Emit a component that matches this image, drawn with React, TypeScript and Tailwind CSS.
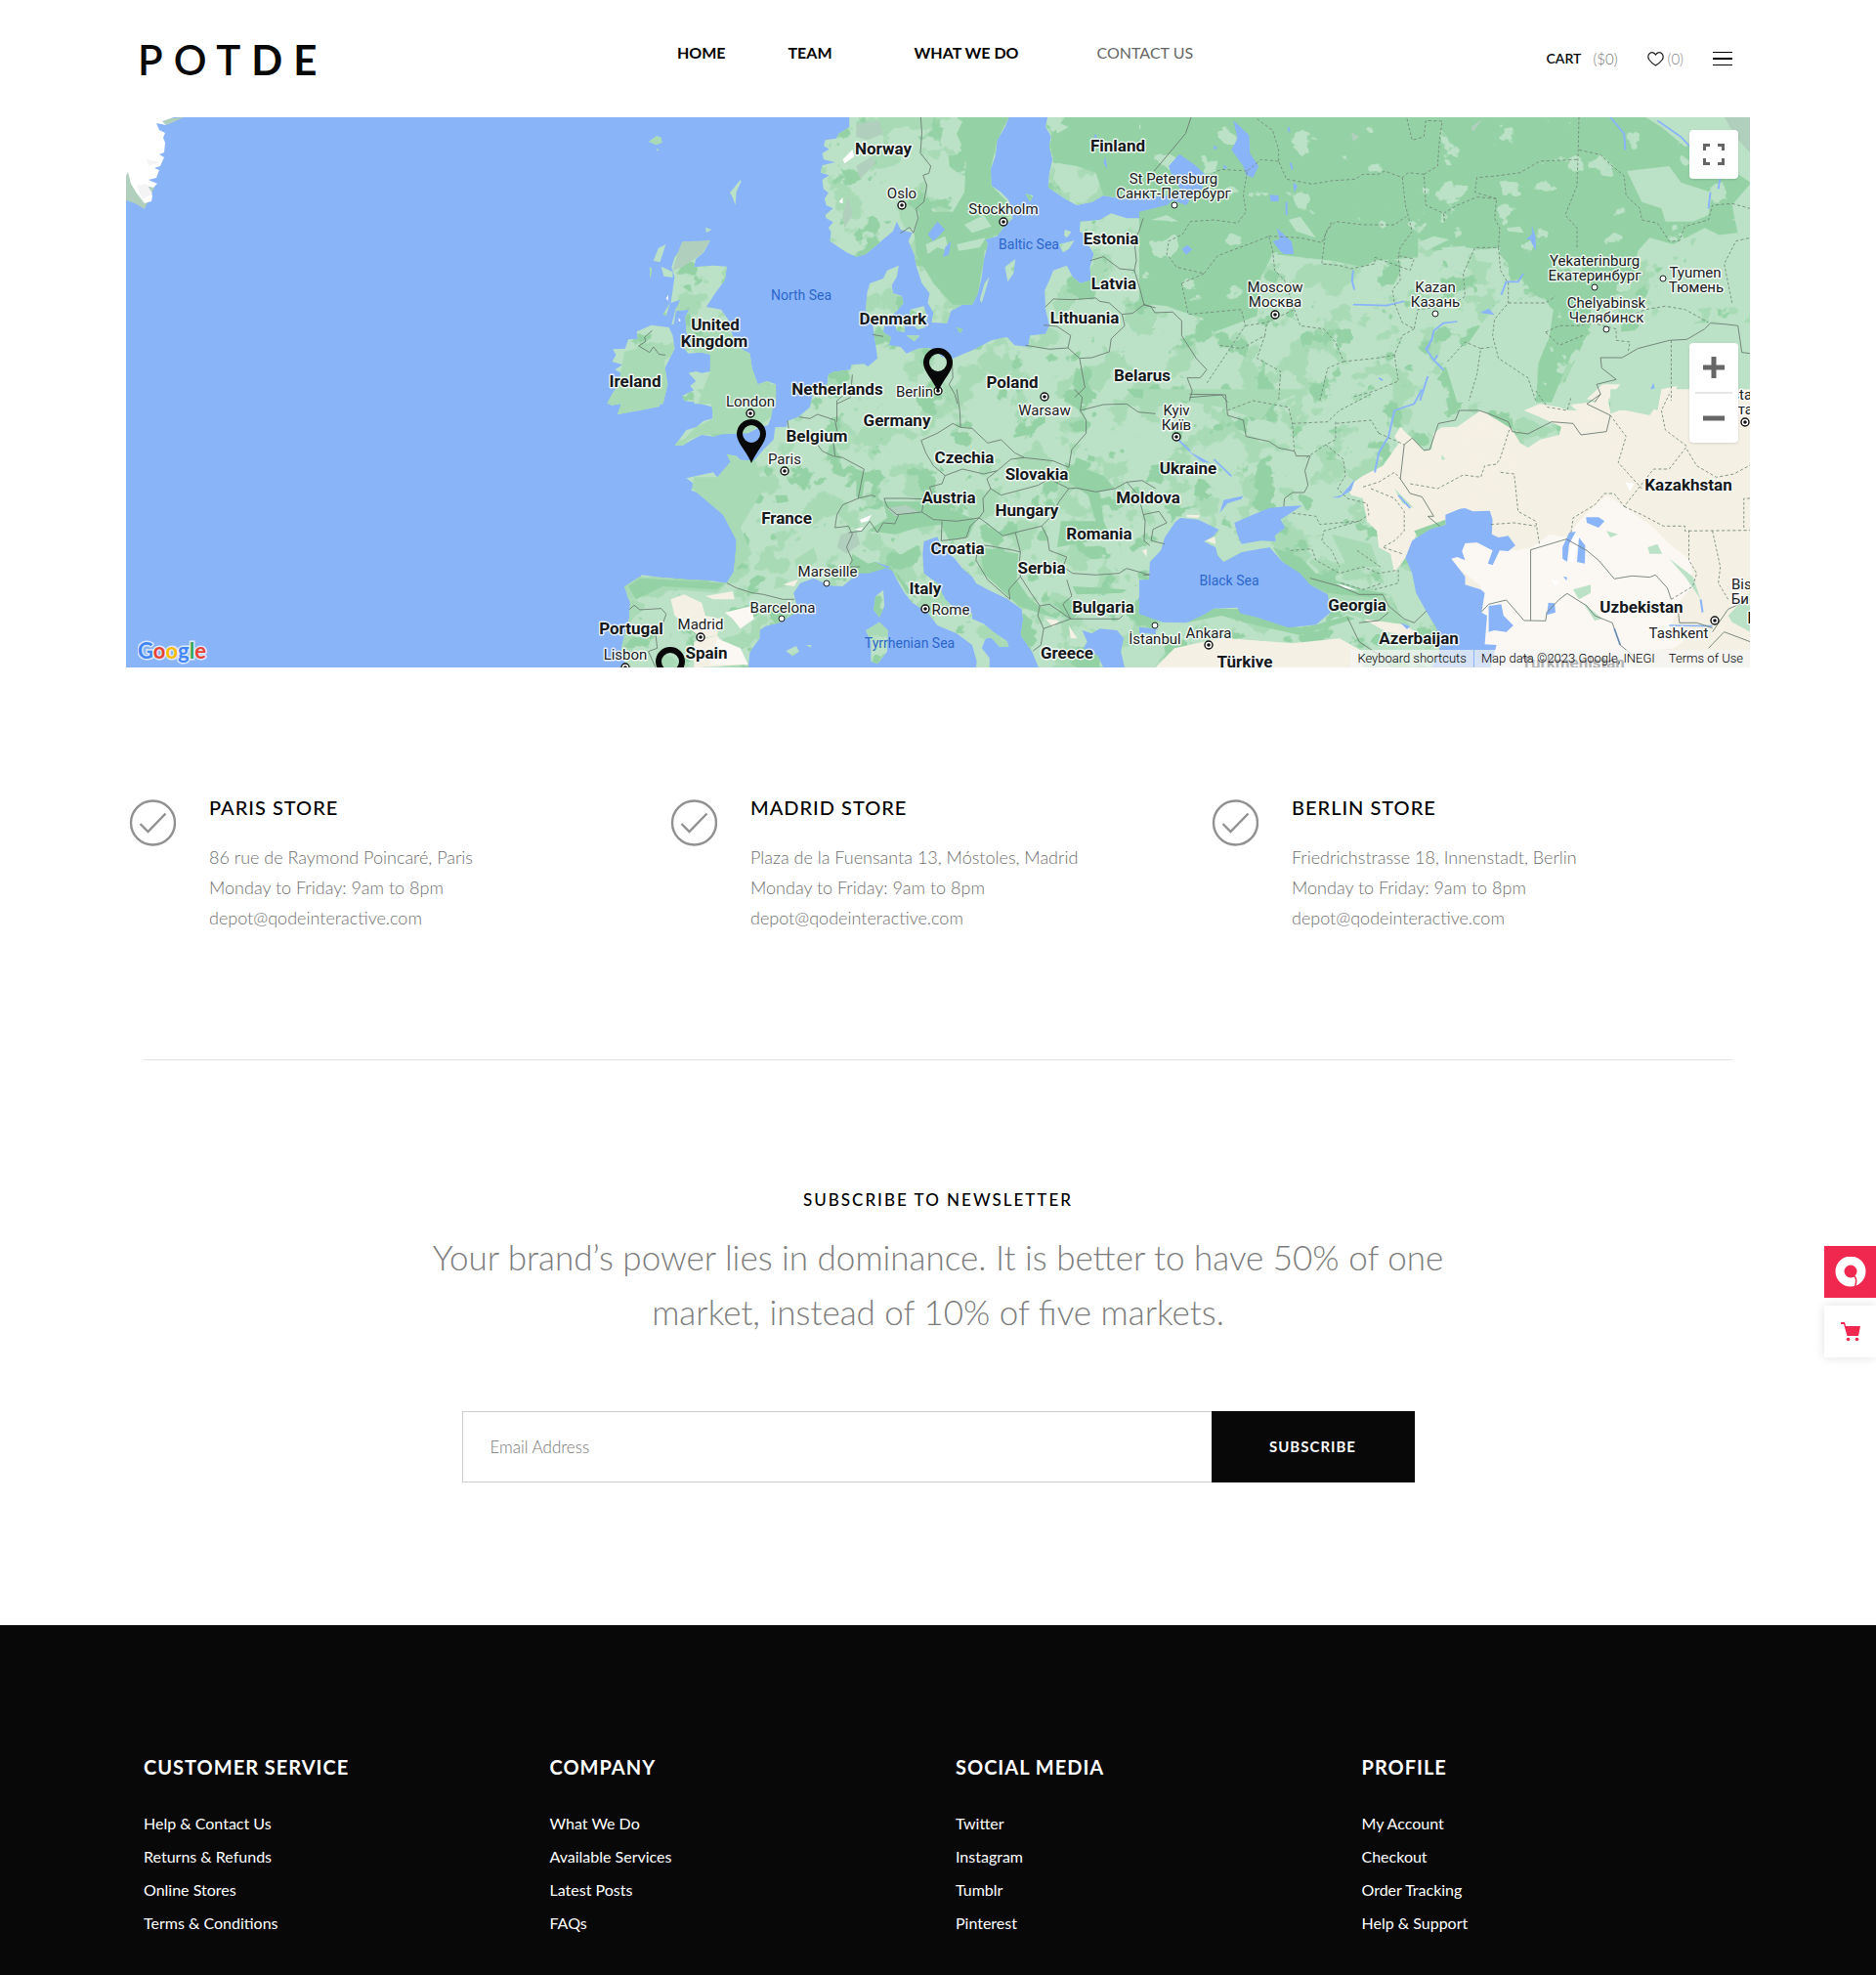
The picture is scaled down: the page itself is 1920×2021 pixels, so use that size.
import React from "react";

type Label = [text: string, x: number, y: number];
type Point = [x: number, y: number];

const countries: Label[] = [
  ["Norway", 904, 158], ["Finland", 1144, 155], ["Estonia", 1137, 250], ["Latvia", 1140, 296],
  ["Lithuania", 1110, 331], ["Denmark", 914, 332], ["United", 732, 338], ["Kingdom", 731, 355],
  ["Ireland", 650, 396], ["Netherlands", 857, 404], ["Poland", 1036, 397], ["Belarus", 1169, 390],
  ["Germany", 918, 436], ["Belgium", 836, 452], ["Czechia", 987, 474], ["Slovakia", 1061, 491],
  ["Austria", 971, 515], ["Hungary", 1051, 528], ["Moldova", 1175, 515], ["France", 805, 536],
  ["Romania", 1125, 552], ["Croatia", 980, 567], ["Serbia", 1066, 587], ["Italy", 947, 608],
  ["Bulgaria", 1129, 627], ["Portugal", 646, 649], ["Spain", 723, 674], ["Greece", 1092, 674],
  ["Ukraine", 1216, 485], ["Türkiye", 1274, 683], ["Georgia", 1389, 625], ["Azerbaijan", 1452, 659],
  ["Kazakhstan", 1728, 502], ["Uzbekistan", 1680, 627], ["Turkmenistan", 1610, 684], ["Kyrgyzstan", 1831, 638],
];

const cities: Label[] = [
  ["Oslo", 923, 203], ["Stockholm", 1027, 219], ["Berlin", 936, 406], ["London", 768, 416],
  ["Warsaw", 1069, 425], ["Paris", 803, 475], ["Marseille", 847, 590], ["Barcelona", 801, 627],
  ["Rome", 973, 629], ["Madrid", 717, 644], ["Lisbon", 640, 675], ["St Petersburg", 1201, 188],
  ["Санкт-Петербург", 1201, 203], ["Moscow", 1305, 299], ["Москва", 1305, 314], ["Kazan", 1469, 299],
  ["Казань", 1469, 314], ["Yekaterinburg", 1632, 272], ["Екатеринбург", 1632, 287], ["Tyumen", 1735, 284],
  ["Тюмень", 1736, 299], ["Chelyabinsk", 1644, 315], ["Челябинск", 1644, 330], ["Kyiv", 1204, 425],
  ["Київ", 1204, 440], ["İstanbul", 1182, 659], ["Ankara", 1237, 653], ["Tashkent", 1718, 653],
  ["Astana", 1786, 409], ["Астана", 1786, 424], ["Bishkek", 1798, 603], ["Бишкек", 1799, 618],
];

const seas: Label[] = [
  ["Baltic Sea", 1053, 255], ["North Sea", 820, 307], ["Black Sea", 1258, 599], ["Tyrrhenian Sea", 931, 663],
];

const capitals: Point[] = [
  [923, 210], [1027, 227], [960, 400], [768, 423], [1069, 406], [803, 482], [947, 623], [717, 652],
  [640, 683], [1305, 322], [1204, 447], [1237, 660], [1755, 635], [1786, 432],
];

const towns: Point[] = [
  [846, 597], [800, 633], [1202, 210], [1469, 321], [1632, 294], [1702, 285], [1644, 337], [1182, 640],
];

const pins: Point[] = [[960, 356], [769, 429], [686, 662]];

/* The map sheet is split in four quarters, each drawn on its own grid. */
const NW = "translate(560 110) scale(.3954 .3333)";
const SW = "translate(560 400) scale(.3954 .3333)";
const NE = "translate(1170 110) scale(.4018 .3333)";
const SE = "translate(1170 400) scale(.4018 .3333)";

const landNW = [
  "M782 30L782 60 755 80 748 95 720 100 716 118 730 128 712 140 716 160 745 168 712 178 708 200 730 208 712 222 715 250 728 262 718 280 722 300 740 310 720 330 722 340 740 352 728 370 735 382 732 410 750 425 775 445 800 458 825 450 850 425 875 400 895 380 905 350 915 375 945 385 935 410 950 450 956 490 970 540 990 570 985 600 1000 630 995 660 1035 662 1045 625 1075 605 1100 605 1115 570 1125 520 1130 470 1140 420 1135 405 1165 395 1180 370 1205 340 1195 300 1195 285 1175 260 1150 240 1148 190 1160 150 1165 100 1185 60 1195 30Z",
  "M1295 30L1290 60 1304 88 1300 120 1308 160 1300 200 1297 245 1340 280 1370 300 1410 290 1440 270 1490 282 1575 262 1575 30Z",
  "M1575 310L1540 340 1500 340 1460 325 1430 345 1380 350 1378 380 1400 395 1400 420 1415 450 1405 490 1408 530 1380 540 1360 520 1345 485 1310 500 1300 530 1288 560 1290 620 1300 670 1290 695 1250 700 1245 735 1210 730 1190 705 1150 715 1110 740 1050 770 1020 765 1010 745 985 738 960 740 930 755 915 735 885 730 890 705 870 690 875 655 905 625 922 600 918 578 895 570 892 545 905 520 910 485 880 500 870 525 835 540 828 570 825 620 843 670 848 710 855 770 830 795 820 787 788 790 785 805 740 812 728 820 725 850 700 870 690 910 1575 910Z",
  "M940 620L975 610 985 650 970 665 980 675 960 682 935 655ZM900 665L925 665 925 690 905 685ZM930 700L965 700 950 718ZM1185 490L1212 465 1207 510 1192 535ZM1145 520L1125 600 1120 590 1132 540ZM1325 420L1365 408 1350 435 1335 445ZM1340 375L1357 382 1345 400 1338 392ZM1060 675L1076 682 1068 692ZM1238 265L1258 270 1250 290Z",
  "M350 412L370 415 422 408 405 445 385 465 380 490 430 485 465 488 460 530 435 570 412 612 450 620 468 650 480 700 500 740 525 755 530 800 545 850 570 840 592 850 592 910 380 910 388 880 370 855 385 840 366 815 385 810 400 815 422 810 422 758 400 752 365 755 355 740 372 712 360 690 358 640 368 620 332 625 345 590 320 600 325 560 330 520 322 490 330 460 342 440Z",
  "M307 420L288 432 275 470 292 475ZM295 488L325 505 325 522 302 518ZM265 490L271 495 267 525ZM335 610L322 665 328 665ZM318 600L300 635 308 640Z",
  "M270 668L232 688 235 710 210 712 202 740 170 742 178 760 168 780 195 790 175 805 200 820 185 850 168 880 155 910 300 910 312 850 305 800 330 740 325 700 315 675Z",
  "M263 105L283 88 295 92 297 108 282 114ZM283 125L290 132 285 133ZM473 262L500 222 502 228 490 258 487 300 480 275ZM410 368L426 375 412 384Z",
];

const landSW = [
  "M200 -5L160 30 165 45 192 38 182 72 240 60 290 48 308 -5Z",
  "M385 -5L350 15 355 30 385 35 430 50 428 85 405 92 385 112 360 120 345 145 330 168 350 168 372 152 400 135 430 140 470 125 520 130 545 115 572 105 580 82 562 75 592 30 592 -5Z",
  "M690 -5L680 50 650 80 622 92 620 110 590 112 586 150 560 180 535 215 500 212 490 200 465 195 478 225 472 260 440 265 430 250 360 268 382 288 372 305 395 315 420 330 448 350 455 380 475 405 490 460 487 510 483 555 465 590 420 582 370 580 325 575 290 572 245 565 232 585 200 600 215 650 212 700 202 740 192 790 205 850 520 850 525 800 550 760 550 735 565 722 600 712 645 680 645 655 638 620 655 590 690 575 730 597 765 600 800 565 830 533 850 525 890 540 905 580 925 620 945 650 985 680 1010 720 1060 745 1100 780 1112 830 1110 850 1145 850 1145 820 1125 790 1135 760 1150 758 1170 785 1195 785 1190 768 1155 740 1130 715 1100 700 1100 682 1060 675 1030 640 1010 590 975 560 972 500 975 462 1010 448 1020 478 1055 515 1075 545 1100 570 1110 590 1140 610 1190 638 1228 670 1232 700 1226 750 1255 800 1272 850 1575 850 1575 -5Z",
  "M850 630L870 612 873 660 860 695 845 672ZM825 735L860 710 882 735 880 800 855 838 838 830 838 770ZM618 798L645 783 652 800 635 814ZM670 780L683 780 683 788Z",
];

const seaSW =
  "M1385 735L1398 770 1388 790 1425 812 1440 850 1495 850 1485 800 1492 760 1475 735 1430 730 1410 745ZM1575 570L1540 610 1530 640 1545 660 1550 690 1575 700ZM1540 742L1575 735 1575 748Z";

const waterNE =
  "M92 143L130 175 157 205 150 250 128 265 110 300 75 285 60 300 -10 320 -10 252 20 275 70 270 95 250 75 215 65 180ZM230 40L270 85 272 140 294 180 280 215 262 208 255 180 225 130 240 95ZM340 370L378 412 384 450 358 450 345 435 330 410 348 405ZM98 435L112 422 125 436 110 452ZM322 268L345 270 345 288 325 288ZM382 230L393 240 385 262ZM858 630L880 617 895 637ZM1300 845L1303 862 1292 865ZM180 115L190 125 180 130ZM205 175L215 185 205 190ZM990 360L1000 400 1000 440 985 405 975 405 990 390Z";

const seaSE =
  "M55 450L82 402 95 390 140 395 192 425 180 445 155 462 185 480 190 505 205 525 250 495 290 482 322 480 355 525 400 560 425 595 470 625 477 680 440 718 370 727 290 695 248 683 240 665 180 668 150 690 110 712 50 710 -10 685 -10 580 15 580 17 525 45 490ZM232 405L300 370 320 360 360 355 405 352 350 395 362 420 335 445 338 462 300 460 250 470 240 440ZM770 380L815 358 840 370 883 368 890 395 888 440 905 450 930 445 948 475 930 492 908 490 890 535 878 530 890 490 850 465 820 468 812 492 820 520 800 510 785 515 820 570 820 595 860 610 870 620 862 680 876 690 870 778 900 780 885 850 735 850 755 800 748 730 725 685 695 620 685 560 668 512 685 460 730 425 770 412ZM880 660L912 655 918 690 943 720 925 740 895 735 880 740ZM1085 435L1102 432 1085 470 1080 524 1068 515 1068 480ZM1110 450L1126 475 1125 530 1105 525ZM1128 388L1160 388 1175 400 1160 420 1130 405ZM1032 650L1048 652 1050 680 1028 688ZM-10 725L40 732 15 745 -10 745ZM195 375L205 335 255 322 250 332 215 345ZM480 328L505 320 540 270 530 305 500 328ZM115 185L140 200 172 222 150 218ZM655 712L680 722 672 732ZM1070 570L1080 572 1078 582Z";

const sandSE =
  "M940 118L900 88 860 60 800 110 760 112 740 130 735 180 715 185 690 150 670 130 655 110 640 140 652 160 610 230 560 260 520 295 530 320 560 330 570 400 595 430 600 480 630 500 640 560 668 512 700 430 770 400 780 848 1556 850 1556 -5 1320 -5 1310 40 1290 75 1230 60 1190 60 1180 5 1160 20 1150 40 1120 60 1085 60 1060 50 1010 40 970 60 1010 80 1065 110 1060 135 1010 150 980 175 960 160Z";

const paleSE =
  "M790 470L870 465 950 490 990 480 1035 440 1080 450 1110 400 1180 320 1235 362 1300 420 1340 470 1395 520 1400 600 1370 640 1345 720 1410 740 1350 790 1270 800 1240 850 870 850 860 600 780 520Z";

const bordersNW =
  "M967 30L970 80 966 140 993 180 988 202 973 208 983 240 975 290 955 310 960 340 948 385 938 368 914 386M1543 340L1532 380 1520 410 1525 470 1520 500 1482 495 1440 458 1406 470M1520 500L1535 560 1545 605 1515 632 1488 635 1455 600 1430 595 1420 585 1360 590 1310 588 1290 612M1488 635L1495 670 1460 710 1455 750 1410 768 1378 770 1348 738 1355 700 1320 672 1285 668M1348 738L1300 742 1238 730M1378 770L1392 860 1365 890M1545 605L1575 615M842 697L870 703M1048 775L1050 830 1040 850 1055 880 1062 910M790 820L785 890 750 910M272 685L252 705 255 718 237 732 265 752 275 735 290 758 306 760";

const bordersSW =
  "M1060 -5L1068 60 1070 112 1050 100 1010 130 968 152 980 190 1000 230 1030 260 1022 285 990 295 1000 330 975 335 970 372 905 380 880 355 872 330 925 330 975 332M1070 112L1100 115 1140 160 1175 150 1210 190 1235 205 1310 215 1350 235 1358 180 1395 130 1395 90 1380 60 1385 20 1365 -5M1380 60L1440 42 1500 40 1530 65 1575 70M1235 205L1200 210 1165 245 1138 270 1148 300 1128 330 1130 370 1118 390 1060 400 1000 395 970 372M1030 260L1075 240 1130 255 1165 245M1148 300L1175 320 1270 290 1300 270 1350 300 1370 298 1420 310 1470 300 1500 280 1540 275 1575 300M1350 300L1325 340 1305 385 1280 415 1210 435 1180 445 1125 395M1500 280L1530 320 1548 400 1545 460 1560 475M1020 460L1060 455 1085 450 1095 415 1118 390 1125 395M1020 460L1022 400M1140 475L1210 490 1225 495 1222 530 1225 570 1195 610 1198 640 1140 580 1110 520 1115 475 1140 475M1225 495L1212 435M1280 415L1295 450 1300 490 1345 510 1335 540 1360 560 1420 565 1480 560 1500 545 1560 565M1345 580L1358 630 1335 655 1355 700 1300 655 1275 660 1252 620 1225 570M1275 660L1270 690 1285 730 1355 700 1480 700 1490 690M1285 730L1278 780 1258 798M622 90L625 115 650 140 700 165 712 185 740 200 765 205 820 240 805 330 840 320 850 325M805 330L765 350 750 380 745 420 780 415 790 440 775 480 790 520 780 540 810 540M780 435L815 430 835 400 855 435 870 405 900 408 910 380M652 80L680 85 700 72 745 90 750 120 740 150 745 200M785 -5L750 30 750 95M465 590L490 605 530 620 560 625 610 640 640 640M212 672L225 658 240 672 295 668 308 685 298 720 280 740 285 790 262 800 280 848";

const bordersNE =
  "M122 30L108 80 28 195M0 605L20 612 30 630 75 628 98 655 98 700 135 770 162 805 145 830 112 830 125 870 118 900M1546 755L1525 752 1515 670 1480 665 1445 662 1430 680 1385 712 1340 715 1260 740 1220 768 1165 768 1168 800 1205 835 1155 850 1165 880 1150 905M118 890L200 882 215 905";

const bordersSE =
  "M118 10L210 12 215 75 255 90 262 140 320 155 345 175 385 185 390 200 425 200 412 245 420 290 410 312 380 312 360 330 358 355M1165 10L1130 40 1190 75 1180 125 1115 135 1095 100 1040 95 980 132 940 125 930 95 880 70 855 60 805 60 795 90 752 100 730 180 715 182 685 145 665 165 655 270 680 315 710 325 740 385 725 385 755 415M425 575L500 600 550 625 610 625 625 660 665 700 690 712 722 675M520 695L550 770 600 810 635 848M550 712L600 705 625 680M862 678L880 655 925 642 970 705 1025 706 1028 680 1060 640 1080 622 1130 660 1150 690 1195 712 1215 780 1260 825M987 705L987 488 1078 455 1130 490 1160 520 1200 577 1245 568 1290 572 1305 565 1335 605 1345 640M1362 668L1366 712 1410 712 1450 728M1440 790L1480 740 1546 770M1450 740L1490 670 1546 640M0 380L40 370 60 405 25 425 20 460 55 470M0 565L15 565";

const regionsNE =
  "M290 35L330 70 345 130 345 165 365 220 430 235 480 225 540 220 560 205 600 205 615 195 660 215 675 200 715 205 720 300 765 325 768 355M672 35L685 100 715 90 720 40 762 42 755 95 750 180 715 205M765 325L800 300 850 275 900 280 895 340 908 370 905 430M1110 30L1108 130 1105 240 1075 330 1105 370 1105 435M1110 130L1165 145 1190 175 1225 210 1230 270 1265 310 1270 345 1310 355 1340 410 1365 410 1380 365 1440 345 1450 300 1500 295 1546 310M1105 160L1010 165 960 200 900 210 850 215 845 260 900 280M660 215L668 300 685 380 655 430 650 455 690 465 680 500 590 460 590 480 530 495 500 485 455 480 465 380 490 350 560 360 640 360 670 335M345 165L300 160 265 195 255 270 262 320 240 355 180 345 120 350 100 390 65 410 60 450 85 490 155 510 190 455 290 410 320 395 330 440 335 500 360 530 385 620 315 660 310 700 250 740 195 730M265 195L200 190 180 200M320 395L400 400 455 415 480 350M98 540L155 510M98 540L115 635 250 620 260 670 210 760 160 850M650 455L655 530 635 560 640 600 660 660 690 680 700 620 780 610 820 580 815 510 845 430 905 430 910 500 930 540 930 600 895 650 890 700 905 770 980 830 1000 900M260 670L315 660M310 700L290 770 350 810 345 900M385 620L400 670 460 680 490 720 510 780 470 800 450 900M510 780L590 770 640 760 660 700 690 680M640 760L650 840 590 870 530 890M775 780L820 720 860 740 850 820 830 900M860 740L890 735M930 600L1025 600 1050 580M1025 690L1060 670 1110 670 1140 660 1205 680 1205 715 1240 720 1235 750M1025 690L1060 730 1120 700M1205 655L1280 620 1330 610 1380 620 1440 660M1500 600L1480 480 1510 410 1546 400M1345 715L1345 900";

const regionsSE =
  "M215 60L280 30 370 50 380 100 385 185M380 100L470 95 500 60 580 10M490 95L490 150 465 165 410 210M465 165L510 210 515 260 495 300 520 330 570 345 575 380 550 400 460 430 455 460 480 490 500 540M600 130L580 90 490 100M600 130L665 165M560 295L600 280 640 250 655 270M580 300L640 330 665 370 665 430 640 460 610 480 660 500M380 375L440 385 450 410 550 400M375 490L430 485 440 520 500 560 560 540 600 560 650 550 650 590 590 610M680 285L750 300 815 258 860 265 870 230 900 225 910 205 935 110M910 250L945 255 955 370 1000 400 1010 475M885 410L945 405 1000 415M1090 435L1095 390 1150 350 1175 315 1200 315 1225 355 1300 240 1340 240 1385 170 1330 120 1320 60 1340 10M1225 355L1270 380 1325 415 1380 415 1380 430 1546 428M1190 75L1230 140 1210 220 1270 300M1385 180L1410 230 1460 265 1505 255 1546 228M1390 428L1390 520 1410 560 1400 600 1345 640M1450 430L1470 540 1465 590 1490 640M1530 420L1530 330 1546 330M1000 0L1030 50 1080 60 1090 20M545 490L610 545M505 590L560 610 610 590";

const rivers =
  "M535 500L532 530 538 560M535 605L620 608 665 595M800 657L765 662 740 685 735 715 720 740 740 775 765 806M735 710L722 745M750 760L740 780M725 825L705 900M968 510L955 535 925 535 912 575M1310 40L1370 90 1400 130 1470 210 1465 250M1445 260L1440 310M1190 30L1225 80 1228 130M365 290L365 330M600 830L610 838M370 60L372 75M375 170L380 190";

const forestNE =
  "M-10 -100L1556 -100 1556 220 1500 300 1520 420 1430 370 1350 420 1290 400 1260 440 1240 560 1140 600 1140 690 1090 760 1040 905 1000 905 1010 760 1040 620 1010 560 960 520 900 440 820 430 740 440 700 400 700 460 590 470 560 490 480 470 330 450 300 520 290 640 180 690 130 640 60 610 -10 600Z";

function Patches({ id, freq, seed, cut, color }: { id: string; freq: string; seed: number; cut: number; color: string }) {
  return (
    <filter id={id} x="0" y="0" width="1" height="1" colorInterpolationFilters="sRGB">
      <feTurbulence type="fractalNoise" baseFrequency={freq} numOctaves={4} seed={seed} />
      <feColorMatrix values={`0 0 0 0 0  0 0 0 0 0  0 0 0 0 0  24 0 0 0 ${-24 * cut}`} result="mask" />
      <feFlood floodColor={color} />
      <feComposite in2="mask" operator="in" result="blot" />
      <feComposite in="blot" in2="SourceAlpha" operator="in" />
    </filter>
  );
}

function Land() {
  return (
    <>
      <g transform={NW}>{landNW.map((d) => <path key={d} d={d} />)}</g>
      <g transform={SW}>{landSW.map((d) => <path key={d} d={d} />)}</g>
      <path d="M1168 120H1791V683H1168Z" />
    </>
  );
}

function EuropeMap() {
  return (
    <svg
      className="block size-full"
      viewBox="129 120 1662 563"
      preserveAspectRatio="xMidYMid slice"
      role="img"
      aria-label="Map of Europe with store locations"
    >
      <defs>
        <Patches id="woods" freq=".032 .036" seed={4} cut={0.62} color="#94d2a5" />
        <Patches id="meadow" freq=".026 .03" seed={9} cut={0.56} color="#a8dab5" />
        <Patches id="glade" freq=".034 .038" seed={15} cut={0.67} color="#bbe2c6" />
        <Patches id="dunes" freq=".02 .028" seed={21} cut={0.6} color="#f5f0e4" />
      </defs>
      <path fill="#8ab4f8" d="M129 120H1791V683H129Z" />

      <path fill="#b1cfbd" d="M129 160L140 185 158 192 152 204 148 214 138 208 129 205ZM165 122L188 120 175 126 170 128Z" />
      <path fill="#fff" d="M129 120H178L166 124 170 128 160 126 163 133 169 136 167 141 169 146 168 156 163 158 168 161 164 170 158 172 163 174 160 182 152 184 161 188 157 192 148 190 156 200 155 206 148 208 140 198 134 188 131 176 129 180Z" />
      <path fill="#f3f4f3" d="M150 163L164 166 152 170ZM140 190L150 188 156 198 146 204Z" />

      <g fill="#bbe2c6"><Land /></g>
      <g filter="url(#meadow)"><Land /></g>
      <g filter="url(#woods)"><Land /></g>

      <g transform={NW}>
        <path fill="#94d2a5" d="M1080 30L1195 30 1165 100 1148 190 1150 240 1200 300 1180 370 1135 405 1130 470 1115 570 1100 605 1050 605 1000 540 955 450 950 385 975 290 1000 320 1050 320 1080 260 1085 150 1060 80ZM1340 30L1575 30 1575 262 1490 280 1440 270 1420 200 1370 180 1310 170 1304 88Z" />
        <path fill="#bbe2c6" d="M980 420L1030 395 1040 440 1010 430 985 450ZM1060 420L1135 400 1120 430 1065 440ZM1310 40L1350 60 1320 80ZM1320 170L1370 180 1380 240 1340 265 1310 220ZM1080 360L1130 330 1150 365 1100 385Z" />
        <path fill="#b1cfbd" d="M800 50L860 40 870 80 830 100 800 90ZM780 270L790 330 770 370 765 330ZM800 180L840 150 850 170 810 220ZM350 412L422 408 400 450 350 490 325 500 340 440Z" />
        <path fill="#fff" d="M765 160L790 130 795 150 770 172ZM755 290L765 275 765 295ZM308 585L314 575 312 595ZM340 645L346 655 341 658Z" />
        <path fill="#a8dab5" d="M425 640L480 700 500 740 525 755 530 800 545 850 592 850 592 910 390 910 422 810ZM200 750L300 720 305 800 312 850 300 910 160 910 185 850Z" />
        <path fill="#8ab4f8" d="M985 390L1010 350 1030 375 1000 410ZM1030 430L1045 410 1040 450 1025 460ZM1535 160L1575 150 1575 190 1555 190ZM1445 150L1450 190 1440 170ZM1420 80L1425 100 1415 90Z" />
      </g>

      <g transform={SW}>
        <path fill="#a8dab5" d="M385 -5L592 -5 580 80 520 130 400 135 345 160 385 112 430 85 425 40ZM200 -5L305 -5 290 48 190 70ZM480 210L540 215 560 300 500 420 530 500 485 550 490 460 455 380 375 300 380 265 440 265ZM640 520L690 480 700 520 650 570ZM200 600L240 570 465 590 440 620 330 610 210 640Z" />
        <path fill="#94d2a5" d="M870 340L990 340 1110 395 1090 450 1040 460 1020 410 960 420 900 440 830 430 880 390ZM790 500L830 530 850 525 905 560 960 640 930 620 890 540 830 560 780 560ZM590 320L620 320 625 340 595 345ZM800 240L825 250 815 330 800 325ZM1340 220L1440 260 1470 300 1430 310 1440 400 1460 450 1320 480 1330 400 1420 400 1400 320 1350 280ZM1120 480L1220 500 1215 580 1250 640 1320 700 1220 660 1130 560ZM1360 600L1500 610 1490 620 1370 625ZM210 600L240 575 460 590 440 610 300 600 230 640ZM1500 -5L1575 -5 1575 25 1520 20Z" />
        <path fill="#f5f0e4" d="M320 640L355 625 400 650 410 690 450 700 440 750 400 760 360 720 330 690ZM380 770L440 750 470 800 520 840 380 850ZM410 630L480 615 485 640 430 640ZM610 595L650 578 640 600ZM1290 700L1325 705 1310 725ZM1350 720L1372 760 1355 760ZM1540 490L1552 485 1552 510Z" />
        <path fill="#fbf8f3" d="M460 680L530 660 535 700 500 730 480 700ZM440 760L500 790 520 840 420 840Z" />
        <path fill="#b1cfbd" d="M760 440L800 430 810 470 775 500 750 480ZM880 360L930 350 960 370 900 385Z" />
        <path fill="#fff" d="M810 395L840 380 830 400 812 405ZM795 425L818 418 812 430Z" />
        <path fill="#8ab4f8" d={seaSW} />
      </g>

      <g transform={NE}>
        <path fill="#94d2a5" d={forestNE} />
        <path fill="#bbe2c6" d="M1232 195L1340 180 1370 230 1450 262 1440 330 1400 350 1330 350 1320 310 1270 290 1250 240ZM1280 30L1546 30 1546 230 1510 200 1480 150 1420 110 1380 120 1320 60ZM760 430L820 425 830 470 780 500ZM840 440L910 430 900 480 850 470ZM900 600L1000 585 1045 620 1035 700 1005 790 1000 905 800 905 770 790 830 720ZM700 415L740 395 780 405 720 440ZM925 370L960 365 970 385 930 380ZM1130 700L1440 660 1546 660 1546 905 1050 905ZM370 345L400 335 440 400 390 380ZM1410 400L1546 380 1546 600 1400 620 1350 560ZM90 350L60 330 20 345Z" />
        <path fill="#b1cfbd" d="M1480 30L1546 30 1546 140 1510 90ZM530 75L550 90 535 105ZM865 35L840 75 835 60Z" />
        <path fill="#f5f0e4" d="M1170 850L1215 850 1180 905 1130 895ZM1320 865L1360 855 1350 905 1320 905Z" />
      </g>

      <g transform={SE}>
        <path fill="#f5f0e4" d={sandSE} />
        <path fill="#f5f0e4" d="M80 790L200 758 380 775 500 760 560 800 560 850 30 850ZM560 700L640 700 720 760 620 740Z" />
        <path fill="#fbf8f3" d={paleSE} />
        <path fill="#94d2a5" d="M330 480L400 510 440 560 560 610 625 625 560 640 470 620 425 595 355 525ZM690 430L770 395 770 415 700 450ZM110 712L180 668 250 670 290 695 400 727 440 718 520 690 540 700 400 750 290 720 200 690Z" />
        <path fill="#a8dab5" d="M0 -5L420 -5 330 40 300 90 200 50 100 30 0 60ZM460 620L625 640 680 720 560 700 480 670ZM480 440L580 470 600 540 520 540Z" />
        <path fill="#bbe2c6" d="M650 540L690 560 700 640 740 720 660 700 620 600ZM1190 -5L1320 -5 1310 60 1260 40 1190 70ZM1285 480L1310 470 1322 500 1290 500ZM1095 610L1140 595 1140 620 1110 640ZM1120 650L1170 700 1150 705ZM1340 515L1400 570 1420 640 1380 570ZM1490 690L1546 620 1546 740 1500 710ZM640 300L665 330 690 360 660 345ZM1180 430L1210 440 1190 450ZM760 195L770 210 760 212Z" />
        <path fill="#fff" d="M1228 280L1250 285 1240 310ZM1095 440L1110 450 1095 530 1085 520ZM1040 580L1060 585 1050 600ZM490 590L520 600 550 615 515 605Z" />
        <path fill="#8ab4f8" d={seaSE} />
        <path fill="#bbe2c6" d="M155 462L185 445 200 420 230 430 240 460 255 475 300 465 322 480 250 495 205 525 190 505 185 480Z" />
        <path fill="#f5f0e4" d="M110 380L145 382 140 390 112 388ZM160 460L182 448 185 470Z" />
      </g>

      <g filter="url(#glade)">
        <g transform={NE}><path d={forestNE} /></g>
      </g>
      <g filter="url(#dunes)">
        <path d="M1400 440L1640 410 1700 440 1500 520 1400 530Z" />
      </g>

      <g fill="none" stroke="#8ab4f8" strokeWidth="5">
        <path transform={NE} d={rivers} />
        <path transform={SE} d="M710 -5L690 40 640 60 625 140 600 190 590 250M85 145L120 185M180 210L225 262M1420 640L1425 680M650 320L680 360M1340 720L1450 722M1200 730L1215 780" />
      </g>
      <path transform={NE} fill="#8ab4f8" d={waterNE} />

      <g fill="none" stroke="#6b7b72" strokeWidth="2.4" strokeLinejoin="round">
        <path transform={NW} d={bordersNW} />
        <path transform={SW} d={bordersSW} />
        <path transform={NE} d={bordersNE} />
        <path transform={SE} d={bordersSE} />
        <g stroke="#74897c" strokeDasharray="8 6">
          <path transform={NE} d={regionsNE} />
          <path transform={SE} d={regionsSE} />
        </g>
      </g>

      {towns.map(([x, y]) => (
        <circle key={`${x}-${y}`} cx={x} cy={y} r="3" fill="#fff" stroke="#202124" />
      ))}
      {capitals.map(([x, y]) => (
        <g key={`${x}-${y}`} stroke="#111">
          <circle cx={x} cy={y} r="4" fill="#fff" strokeWidth="1.4" />
          <circle cx={x} cy={y} r="1.8" fill="#111" stroke="none" />
        </g>
      ))}

      <g fill="#080808" fillRule="evenodd">
        {pins.map(([x, y]) => (
          <path
            key={x}
            transform={`translate(${x} ${y})`}
            d="M0 0A15 15 0 0 1 15 15C15 24 6 31 0 45C-6 31-15 24-15 15A15 15 0 0 1 0 0ZM0 6A9 9 0 1 0 0 24A9 9 0 1 0 0 6Z"
          />
        ))}
      </g>

      <g textAnchor="middle" stroke="#fff" strokeWidth="3" strokeLinejoin="round" paintOrder="stroke" strokeOpacity=".8">
        <g className="text-[17px] font-bold" fill="#15191c">
          {countries.map(([text, x, y]) => <text key={text} x={x} y={y}>{text}</text>)}
        </g>
        <g className="text-[15px]" fill="#202124">
          {cities.map(([text, x, y]) => <text key={text} x={x} y={y}>{text}</text>)}
        </g>
      </g>
      <g className="text-[14px]" fill="#2a66cc" textAnchor="middle">
        {seas.map(([text, x, y]) => <text key={text} x={x} y={y}>{text}</text>)}
      </g>
    </svg>
  );
}

const googleLetters: [string, string][] = [
  ["G", "#4285f4"], ["o", "#ea4335"], ["o", "#fbbc04"], ["g", "#4285f4"], ["l", "#34a853"], ["e", "#ea4335"],
];

function StoreMap() {
  return (
    <section aria-label="Store map" className="relative h-[563px] overflow-hidden font-['Roboto',sans-serif]">
      <EuropeMap />
      <a href="#google" aria-label="Google" className="absolute bottom-0 left-3">
        <svg className="h-8 w-20" viewBox="0 0 80 32">
          <text x="0" y="23" className="font-['Lato',sans-serif] text-[22px] font-bold" stroke="#fff" strokeWidth="3" strokeOpacity=".7" paintOrder="stroke">
            {googleLetters.map(([letter, color], i) => <tspan key={i} fill={color}>{letter}</tspan>)}
          </text>
        </svg>
      </a>
      <button aria-label="Toggle fullscreen view" className="absolute top-[13px] right-3 grid size-[50px] place-items-center rounded-sm bg-white shadow">
        <svg className="size-[22px]" viewBox="0 0 22 22" fill="none" stroke="#666" strokeWidth="3">
          <path d="M1.5 7V1.5H7M15 1.5h5.5V7M20.5 15v5.5H15M7 20.5H1.5V15" />
        </svg>
      </button>
      <div className="absolute top-[231px] right-3 flex w-[50px] flex-col items-center rounded-sm bg-white shadow">
        <button aria-label="Zoom in" className="grid h-[50px] w-full place-items-center">
          <svg className="size-[22px]" viewBox="0 0 22 22" stroke="#666" strokeWidth="5"><path d="M11 0V22M0 11H22" /></svg>
        </button>
        <span className="h-0.5 w-[38px] bg-[#e6e6e6]" />
        <button aria-label="Zoom out" className="grid h-[50px] w-full place-items-center">
          <svg className="size-[22px]" viewBox="0 0 22 22" stroke="#666" strokeWidth="5"><path d="M0 11H22" /></svg>
        </button>
      </div>
      <div className="absolute right-0 bottom-0 flex h-[18px] items-center bg-[#f5f5f5]/70 text-[13px] leading-[18px] font-light text-black">
        <button className="px-[7px]">Keyboard shortcuts</button>
        <span className="border-l border-[#8ab4f8] px-[7px]">Map data ©2023 Google, INEGI</span>
        <a href="#terms" className="px-[7px]">Terms of Use</a>
      </div>
    </section>
  );
}

function Header() {
  return (
    <header className="mx-auto grid h-[120px] w-full max-w-[1662px] grid-cols-[1fr_auto_1fr] items-start pr-[18px] pl-3">
      <a href="#home" aria-label="Potde" className="pt-[35px] text-[42px] leading-[52px] font-semibold tracking-[11px] text-[#080808]">
        POT<span className="font-bold">DE</span>
      </a>
      <nav aria-label="Main" className="flex pt-[42px] text-base leading-6 font-bold text-black">
        <a href="#home">HOME</a>
        <a href="#team" className="ml-16">TEAM</a>
        <a href="#what" className="ml-[84px]">WHAT WE DO</a>
        <a href="#contact" aria-current="page" className="ml-20 font-normal text-[#666]">CONTACT US</a>
      </nav>
      <div className="flex items-center justify-end pt-12 text-[15px] leading-6">
        <a href="#cart" className="flex gap-3 font-semibold text-[#080808]">
          <span className="text-sm leading-6">CART</span>
          <span className="font-light text-[#777]">($0)</span>
        </a>
        <a href="#wishlist" aria-label="Wishlist" className="ml-[30px] flex items-center gap-1 font-light text-[#888]">
          <svg className="size-[17px]" viewBox="0 0 17 17" fill="none" stroke="#222" strokeWidth="1.2">
            <path d="M8.5 4C7.200 1.800 4.500 1 2.500 2.500C.5 4 .3 7 1.800 9C3.500 11.500 6 13.500 8.500 15C11 13.500 13.500 11.500 15.200 9C16.700 7 16.500 4 14.500 2.500C12.500 1 9.800 1.800 8.500 4Z" />
          </svg>
          (0)
        </a>
        <button aria-label="Open menu" className="ml-[30px] flex w-5 flex-col gap-[5px]">
          <span className="h-px w-full bg-black" />
          <span className="h-0.5 w-full bg-black" />
          <span className="h-px w-full bg-black" />
        </button>
      </div>
    </header>
  );
}

const stores = [
  { name: "PARIS STORE", address: "86 rue de Raymond Poincaré, Paris" },
  { name: "MADRID STORE", address: "Plaza de la Fuensanta 13, Móstoles, Madrid" },
  { name: "BERLIN STORE", address: "Friedrichstrasse 18, Innenstadt, Berlin" },
];

function Stores() {
  return (
    <section aria-label="Stores" className="grid grid-cols-3 pt-[127px] pb-[129px]">
      {stores.map(({ name, address }) => (
        <article key={name} className="flex gap-8 pl-[3px]">
          <svg className="mt-2 size-12 shrink-0" viewBox="0 0 48 48" fill="none" stroke="#919191" strokeWidth="2.4">
            <circle cx="24.5" cy="24" r="22.5" />
            <path d="M11.500 25L19.500 33L37.500 14.500" />
          </svg>
          <div className="pl-0.5">
            <h2 className="text-xl leading-8 font-medium tracking-[1px] text-black">{name}</h2>
            <p className="mt-5 text-lg leading-[31px] font-light text-[#707070]">
              {address}
              <br />
              Monday to Friday: 9am to 8pm
              <br />
              <a href="mailto:depot@qodeinteractive.com">depot@qodeinteractive.com</a>
            </p>
          </div>
        </article>
      ))}
    </section>
  );
}

function Newsletter() {
  return (
    <section aria-label="Newsletter" className="mx-[18px] border-t border-[#e1e1e1] pt-[129px] pb-[146px] text-center">
      <h2 className="text-[17px] leading-7 font-medium tracking-[2px] text-black">SUBSCRIBE TO NEWSLETTER</h2>
      <p className="mx-auto mt-4 max-w-[1080px] text-[35px] leading-[56px] font-light text-[#7c7c7c]">
        Your brand’s power lies in dominance. It is better to have 50% of one market, instead of 10% of five markets.
      </p>
      <form className="mx-auto mt-[74px] flex h-[73px] max-w-[975px]" onSubmit={(e) => e.preventDefault()}>
        <input
          type="email"
          aria-label="Email Address"
          placeholder="Email Address"
          className="min-w-0 grow border border-r-0 border-[#ccc] px-7 text-[17px] font-light outline-none placeholder:text-[#777]"
        />
        <button className="w-52 bg-[#080808] text-[15px] font-bold tracking-[1px] text-white">SUBSCRIBE</button>
      </form>
    </section>
  );
}

const footerColumns = [
  { title: "CUSTOMER SERVICE", links: ["Help & Contact Us", "Returns & Refunds", "Online Stores", "Terms & Conditions"] },
  { title: "COMPANY", links: ["What We Do", "Available Services", "Latest Posts", "FAQs"] },
  { title: "SOCIAL MEDIA", links: ["Twitter", "Instagram", "Tumblr", "Pinterest"] },
  { title: "PROFILE", links: ["My Account", "Checkout", "Order Tracking", "Help & Support"] },
];

function Footer() {
  return (
    <footer className="grow bg-[#080808] pt-[129px] pb-9 text-white">
      <div className="mx-auto grid w-full max-w-[1662px] grid-cols-4">
        {footerColumns.map(({ title, links }) => (
          <div key={title} className="pl-[18px]">
            <h2 className="text-xl leading-8 font-bold tracking-[1px]">{title}</h2>
            <ul className="mt-[25px] text-base leading-[34px]">
              {links.map((link) => (
                <li key={link}><a href="#footer">{link}</a></li>
              ))}
            </ul>
          </div>
        ))}
      </div>
    </footer>
  );
}

function SideButtons() {
  return (
    <aside aria-label="Theme links" className="fixed top-[1275px] right-0 flex flex-col gap-2">
      <a href="#themes" aria-label="More themes" className="grid size-[53px] place-items-center bg-[#f02850]">
        <svg className="size-8" viewBox="0 0 32 32">
          <circle cx="16" cy="15" r="11" fill="none" stroke="#fff" strokeWidth="9" />
          <path d="M19 19C23 22 22 27 20 32" fill="none" stroke="#f02850" strokeWidth="1.5" />
        </svg>
      </a>
      <a href="#buy" aria-label="Buy theme" className="grid size-[53px] place-items-center bg-white shadow-[0_0_10px_rgba(0,0,0,0.12)]">
        <svg className="size-5" viewBox="0 0 20 20" fill="#f02850">
          <path d="M0 0H4L5 4H20L18 14H6.500L3 2H0Z" />
          <circle cx="7.5" cy="17.5" r="1.8" />
          <circle cx="16.5" cy="17.5" r="1.8" />
        </svg>
      </a>
    </aside>
  );
}

export default function App() {
  return (
    <div className="flex min-h-screen flex-col bg-white font-['Lato',sans-serif]">
      <Header />
      <main className="mx-auto w-full max-w-[1662px]">
        <StoreMap />
        <Stores />
        <Newsletter />
      </main>
      <Footer />
      <SideButtons />
    </div>
  );
}
